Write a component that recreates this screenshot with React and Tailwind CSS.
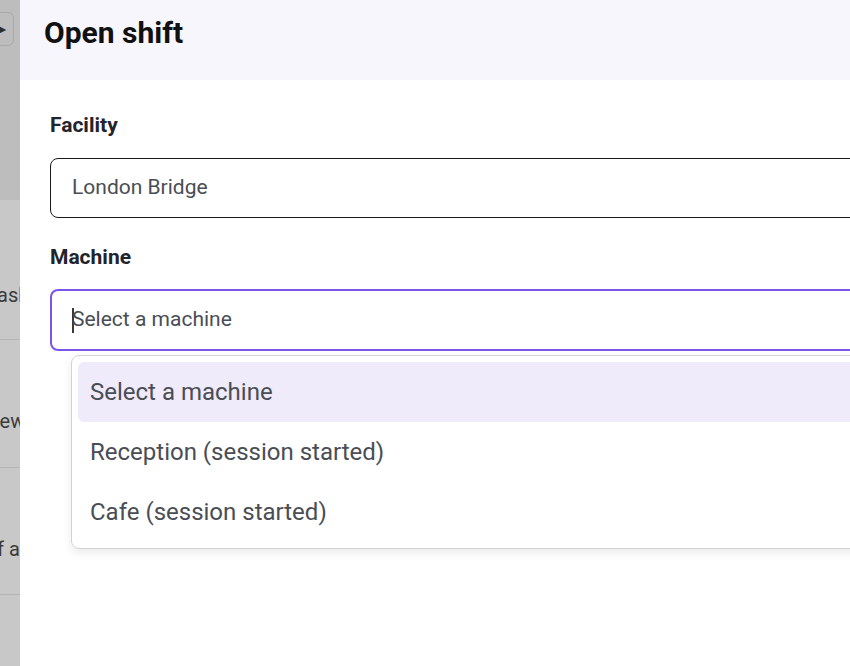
export default function App() {
  return (
    <div className="flex h-[666px] w-[850px] overflow-hidden bg-white" style={{ fontFamily: 'Roboto, "Liberation Sans", sans-serif' }}>
      {/* dimmed page behind the drawer */}
      <div className="flex w-[20px] shrink-0 flex-col overflow-hidden bg-[#c8c8c8] text-[20px] leading-[26px] text-[#3a3a3a]">
        <div className="h-[200px] shrink-0 bg-[#bdbdbd] pt-[12px]">
          <div className="ml-[-12px] flex h-[34px] w-[26px] items-center justify-end rounded-[6px] border border-[#a9a9a9] pr-[7px]">
            <span className="text-[12px] leading-none text-[#2d2d2d]">▶</span>
          </div>
        </div>
        <div className="flex h-[140px] shrink-0 items-end border-b border-[#b4b4b4] pb-[31px]">
          <span className="ml-[-16px] whitespace-nowrap">Cash</span>
        </div>
        <div className="flex h-[128px] shrink-0 items-end border-b border-[#b4b4b4] pb-[33px]">
          <span className="ml-[-18px] whitespace-nowrap">View</span>
        </div>
        <div className="flex h-[127px] shrink-0 items-end border-b border-[#b4b4b4] pb-[32px]">
          <span className="ml-[-3px] whitespace-nowrap">f a</span>
        </div>
      </div>

      {/* drawer */}
      <div className="flex min-w-0 flex-1 flex-col">
        <div className="flex h-[80px] shrink-0 items-center bg-[#f8f6fd] pl-[24px] pb-[14px]">
          <h2 className="text-[30px] font-bold leading-[36px] text-[#111111]">Open shift</h2>
        </div>

        <div className="flex flex-col pl-[30px] pt-[32px]">
          <label className="text-[21px] font-bold leading-[26px] text-[#23232b]">Facility</label>
          <div className="mt-[20px] mr-[-20px] flex h-[60px] items-center rounded-[8px] border border-[#1a1a1a] pl-[21px]">
            <span className="text-[21px] text-[#4a4d55]">London Bridge</span>
          </div>

          <label className="mt-[26px] text-[21px] font-bold leading-[26px] text-[#23232b]">Machine</label>
          <div className="mt-[19px] mr-[-20px] flex h-[62px] items-center rounded-[8px] border-2 border-[#7c55e6] pl-[20px]">
            <span className="h-[25px] w-[2px] bg-[#3a3a3a]" />
            <span className="ml-[-2px] text-[21px] text-[#4a4d55]">Select a machine</span>
          </div>

          <div className="mt-[4px] ml-[21px] mr-[-20px] flex flex-col rounded-[8px] border border-[#d4d4d4] bg-white px-[6px] py-[6px] shadow-[0_4px_10px_rgba(0,0,0,0.08)]">
            <div className="flex h-[60px] items-center rounded-[6px] bg-[#efebfb] pl-[12px] text-[24px] text-[#4a4d55]">Select a machine</div>
            <div className="flex h-[60px] items-center pl-[12px] text-[24px] text-[#4a4d55]">Reception (session started)</div>
            <div className="flex h-[60px] items-center pl-[12px] text-[24px] text-[#4a4d55]">Cafe (session started)</div>
          </div>
        </div>
      </div>
    </div>
  );
}
